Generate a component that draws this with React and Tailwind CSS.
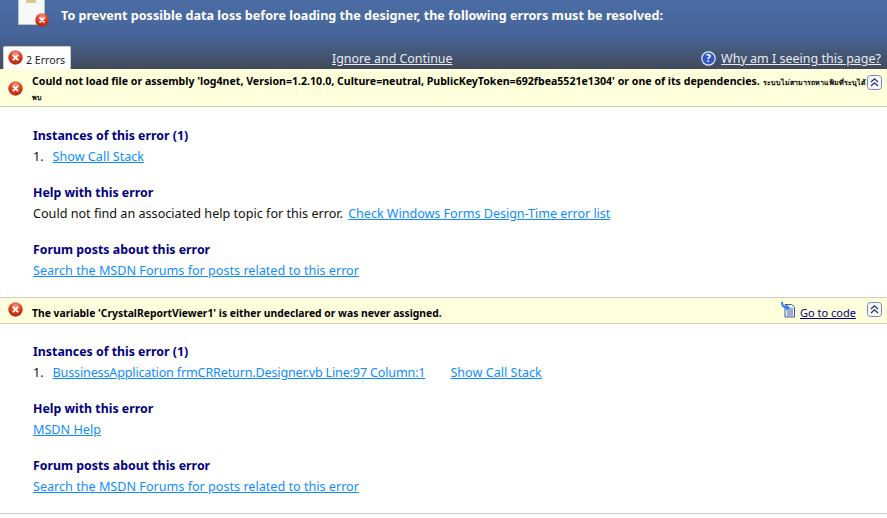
const font = { fontFamily: '"Noto Sans", Tahoma, sans-serif' };

function ErrIcon({ size = 15, id }) {
  return (
    <svg width={size} height={size} viewBox="0 0 15 15" className="shrink-0">
      <defs>
        <radialGradient id={id} cx="50%" cy="25%" r="80%">
          <stop offset="0%" stopColor="#f59a80" />
          <stop offset="50%" stopColor="#dc4020" />
          <stop offset="100%" stopColor="#a8200c" />
        </radialGradient>
      </defs>
      <circle cx="7.5" cy="7.5" r="7.2" fill={`url(#${id})`} />
      <path d="M5.4 5.4 L9.6 9.6 M9.6 5.4 L5.4 9.6" stroke="#fff" strokeWidth="2" strokeLinecap="round" />
    </svg>
  );
}

function Collapse() {
  return (
    <svg width="15" height="15" viewBox="0 0 15 15" className="shrink-0">
      <rect x="0.5" y="0.5" width="14" height="14" rx="3" fill="#f6f8fc" stroke="#7488b4" />
      <path d="M4 7 L7.5 3.8 L11 7 M4 11 L7.5 7.8 L11 11" fill="none" stroke="#24366e" strokeWidth="1.3" />
    </svg>
  );
}

function Link({ children, className = "" }) {
  return <span className={`text-[#0f8dff] underline ${className}`}>{children}</span>;
}

function Heading({ children }) {
  return <div className="text-[12.35px] leading-[17px] font-bold text-[#000080]">{children}</div>;
}

function Section({ title, children }) {
  return (
    <div className="mb-[19px]">
      <Heading>{title}</Heading>
      <div className="mt-[4px] text-[12.62px] leading-[17px] text-[#101010] whitespace-nowrap">{children}</div>
    </div>
  );
}

export default function App() {
  return (
    <div className="w-[887px] h-[518px] overflow-hidden bg-white flex flex-col" style={font}>
      <header className="h-[69px] shrink-0 flex flex-col bg-gradient-to-b from-[#4b6da4] via-[#46659a] to-[#414a5a]">
        <div className="h-[46px] flex items-start pl-[18px]">
          <div className="relative w-[27px] h-[25px] bg-[#f7f8fa] border border-[#b8c0cc] border-t-0 shrink-0">
            <div className="absolute left-[7px] top-0 w-[10px] h-[3px] bg-[#d8c98a]" />
            <div className="absolute left-[16px] top-[13px]"><ErrIcon size={14} id="e0" /></div>
          </div>
          <div className="ml-[16px] mt-[7px] text-white text-[12.6px] leading-[17px] font-bold whitespace-nowrap">
            To prevent possible data loss before loading the designer, the following errors must be resolved:
          </div>
        </div>
        <div className="h-[23px] flex items-end relative">
          <div className="ml-[3px] w-[68px] h-[23px] bg-white rounded-t-[2px] border border-b-0 border-[#c8ccd4] flex items-start pl-[4px] pt-[3px] gap-[3px] text-[10.6px] text-[#222]">
            <ErrIcon size={15} id="e1" />
            <span className="mt-[2.5px]">2 Errors</span>
          </div>
          <div className="ml-[261px] mb-[2px] text-[12.4px] leading-[17px] text-[#e8ecf2] underline whitespace-nowrap">Ignore and Continue</div>
          <div className="ml-auto mr-[6px] mb-[2px] flex items-center gap-[5px] text-[12.5px] leading-[17px] text-[#e8ecf2] whitespace-nowrap">
            <svg width="15" height="15" viewBox="0 0 15 15">
              <circle cx="7.5" cy="7.5" r="6.7" fill="#2f58c4" stroke="#e4eafa" strokeWidth="1.2" />
              <text x="7.5" y="11" textAnchor="middle" fontSize="10" fontWeight="700" fill="#fff">?</text>
            </svg>
            <span className="underline">Why am I seeing this page?</span>
          </div>
        </div>
      </header>

      <div className="h-[38px] shrink-0 bg-[#ffffdc] border-b border-[#cfcdbf] flex pl-[8px] pr-[5px]">
        <div className="pt-[12px]"><ErrIcon id="e2" /></div>
        <div className="ml-[9px] flex-1 pt-[5px] text-[10.6px] leading-[15px] font-bold text-black">
          <div className="whitespace-nowrap">Could not load file or assembly 'log4net, Version=1.2.10.0, Culture=neutral, PublicKeyToken=692fbea5521e1304' or one of its dependencies. <span className="text-[7.1px]">ระบบไม่สามารถหาแฟ้มที่ระบุได้</span></div>
          <div className="text-[7.1px] leading-[12px] mt-[1px]">พบ</div>
        </div>
        <div className="pt-[6px]"><Collapse /></div>
      </div>

      <div className="h-[191px] shrink-0 pl-[33px] pt-[20px] border-b border-[#d4d0c8]">
        <Section title="Instances of this error (1)">
          1.<Link className="ml-[9px]">Show Call Stack</Link>
        </Section>
        <Section title="Help with this error">
          Could not find an associated help topic for this error. <Link className="ml-[2px] tracking-[-0.05px]">Check Windows Forms Design-Time error list</Link>
        </Section>
        <Section title="Forum posts about this error">
          <Link>Search the MSDN Forums for posts related to this error</Link>
        </Section>
      </div>

      <div className="h-[26px] shrink-0 bg-[#ffffdc] border-b border-[#cfcdbf] flex items-center pl-[8px] pr-[5px]">
        <div className="-mt-[3px]"><ErrIcon id="e3" /></div>
        <div className="ml-[9px] flex-1 mt-[6px] text-[10.35px] font-bold text-black whitespace-nowrap">The variable 'CrystalReportViewer1' is either undeclared or was never assigned.</div>
        <svg width="16" height="17" viewBox="0 0 16 17" className="-mt-[2px] mr-[4px]">
          <path d="M5 3.5 H11.5 L14.5 6 V16 H5 Z" fill="#eef2fb" stroke="#3d5a9c" />
          <path d="M7 8H13M7 10H13M7 12H13M7 14H13" stroke="#4a66a8" />
          <path d="M2 1 C2 5 4 6.5 7 6.5" fill="none" stroke="#2a86e0" strokeWidth="2" />
          <path d="M6 3.5 L10 6.5 L6 9.5 Z" fill="#2a86e0" />
        </svg>
        <span className="text-[11px] text-[#000080] underline mr-[11px] mt-[5px]">Go to code</span>
        <div className="-mt-[2px]"><Collapse /></div>
      </div>

      <div className="h-[190px] shrink-0 pl-[33px] pt-[19px] border-b border-[#d4d0c8]">
        <Section title="Instances of this error (1)">
          1.<Link className="ml-[9px] tracking-[-0.18px]">BussinessApplication frmCRReturn.Designer.vb Line:97 Column:1</Link><Link className="ml-[25px]">Show Call Stack</Link>
        </Section>
        <Section title="Help with this error">
          <Link>MSDN Help</Link>
        </Section>
        <Section title="Forum posts about this error">
          <Link>Search the MSDN Forums for posts related to this error</Link>
        </Section>
      </div>
    </div>
  );
}
